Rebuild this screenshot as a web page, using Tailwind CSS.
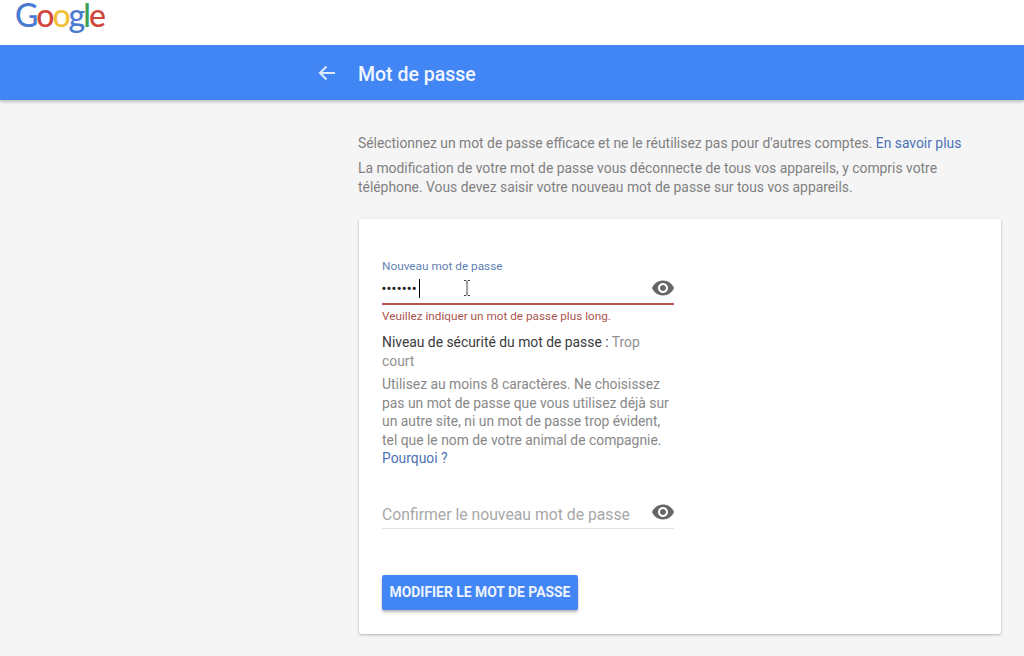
<!DOCTYPE html>
<html lang="fr">
<head>
<meta charset="utf-8">
<title>Mot de passe</title>
<script src="https://cdn.jsdelivr.net/npm/@tailwindcss/browser@4"></script>
</head>
<body class="w-[1024px] h-[656px] overflow-hidden bg-[#f5f5f6] font-['Roboto',sans-serif]">
<header class="h-[45px] bg-white pl-[15px]">
  <div class="font-['Lato',sans-serif] text-[32px] leading-[30px] tracking-[-2px] font-medium whitespace-nowrap"><span class="text-[#4a7bd0]">G</span><span class="text-[#d1453a]">o</span><span class="text-[#f2c034]">o</span><span class="text-[#4a7bd0]">g</span><span class="text-[#3c9f58]">l</span><span class="text-[#d1453a]">e</span></div>
</header>
<div class="h-[55px] bg-[#4285f4] shadow-[0_2px_3px_rgba(0,0,0,0.22)] pl-[317px] flex items-center relative">
  <svg class="w-[20px] h-[20px] mr-[21px]" viewBox="0 0 20 20" fill="none" stroke="#dfeafd" stroke-width="2"><path d="M18 10H3M9.500 3.500L3 10l6.500 6.500"/></svg>
  <h1 class="text-[19.500px] font-medium text-[#f2f7ff] mt-[4px]">Mot de passe</h1>
</div>
<main class="pl-[358px] pt-[34px] w-[1001px]">
  <p class="text-[13.870px] leading-[18px] text-[#808080] whitespace-nowrap">Sélectionnez un mot de passe efficace et ne le réutilisez pas pour d'autres comptes. <span class="text-[#4a72b4]">En savoir plus</span></p>
  <p class="mt-[7px] text-[13.870px] leading-[18.500px] text-[#808080] whitespace-nowrap">La modification de votre mot de passe vous déconnecte de tous vos appareils, y compris votre<br>téléphone. Vous devez saisir votre nouveau mot de passe sur tous vos appareils.</p>
  <section class="mt-[23px] ml-[1px] w-[642px] h-[415px] bg-white rounded-[2px] shadow-[0_1px_3px_rgba(0,0,0,0.28)] pl-[23px] pt-[40px]">
    <div class="w-[292px]">
      <label class="block text-[11.800px] leading-[14px] text-[#5f7fb5]">Nouveau mot de passe</label>
      <div class="relative h-[30px] mt-[2px] border-b-2 border-[#b8544e] flex items-center pb-[1px]">
        <span class="text-[11px] leading-none tracking-[1.200px] text-[#222] font-bold font-['Liberation_Sans',sans-serif]">•••••••</span>
        <span class="w-[1px] h-[19px] bg-black ml-[2px]"></span>
        <svg class="absolute left-[80px] top-[4px] w-[10px] h-[18px]" viewBox="0 0 10 18" fill="none" stroke="#444" stroke-width="1"><path d="M2 1.500h2l1 1 1-1h2M5 2.500v13M2 16.500h2l1-1 1 1h2"/></svg>
        <svg class="absolute right-[-1px] top-[1px] w-[24px] h-[24px]" viewBox="0 0 24 24" fill="#666"><path d="M12 4.500C7 4.500 2.730 7.610 1 12c1.730 4.390 6 7.500 11 7.500s9.270-3.110 11-7.500c-1.730-4.390-6-7.500-11-7.500zM12 17c-2.760 0-5-2.240-5-5s2.240-5 5-5 5 2.240 5 5-2.240 5-5 5zm0-8c-1.660 0-3 1.340-3 3s1.340 3 3 3 3-1.340 3-3-1.340-3-3-3z"/></svg>
      </div>
      <p class="mt-[5px] text-[11.750px] leading-[13px] text-[#a9544f]">Veuillez indiquer un mot de passe plus long.</p>
      <p class="mt-[10px] text-[13.870px] leading-[18.500px] text-[#3a3a3a] w-[270px]">Niveau de sécurité du mot de passe : <span class="text-[#909090]">Trop court</span></p>
      <p class="mt-[5px] text-[13.870px] leading-[18.500px] text-[#888888] w-[290px]">Utilisez au moins 8 caractères. Ne choisissez pas un mot de passe que vous utilisez déjà sur un autre site, ni un mot de passe trop évident, tel que le nom de votre animal de compagnie. <span class="text-[#4a72b4]">Pourquoi ?</span></p>
      <div class="relative h-[34px] mt-[27px] border-b border-[#e2e2e2] flex items-end pb-[2px]">
        <span class="text-[15.750px] leading-[22px] text-[#a8a8a8] whitespace-nowrap">Confirmer le nouveau mot de passe</span>
        <svg class="absolute right-[-1px] top-[5px] w-[24px] h-[24px]" viewBox="0 0 24 24" fill="#666"><path d="M12 4.500C7 4.500 2.730 7.610 1 12c1.730 4.390 6 7.500 11 7.500s9.270-3.110 11-7.500c-1.730-4.390-6-7.500-11-7.500zM12 17c-2.760 0-5-2.240-5-5s2.240-5 5-5 5 2.240 5 5-2.240 5-5 5zm0-8c-1.660 0-3 1.340-3 3s1.340 3 3 3 3-1.340 3-3-1.340-3-3-3z"/></svg>
      </div>
      <button class="mt-[46px] w-[196px] h-[35px] pt-[1px] bg-[#4285f4] rounded-[2px] shadow-[0_2px_3px_rgba(0,0,0,0.3)] text-[13.900px] font-bold text-[#eef4ff] whitespace-nowrap">MODIFIER LE MOT DE PASSE</button>
    </div>
  </section>
</main>
</body>
</html>
